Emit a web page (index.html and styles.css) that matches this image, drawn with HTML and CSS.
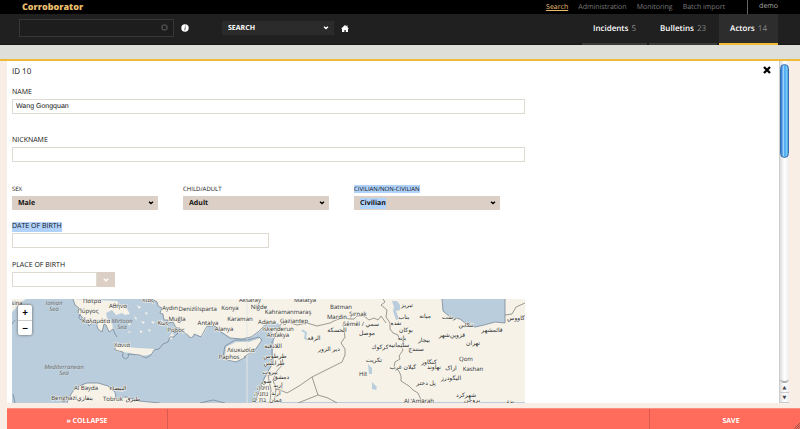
FILE: index.html
```html
<!DOCTYPE html>
<html lang="en">
<head>
<meta charset="utf-8">
<title>Corroborator</title>
<link rel="stylesheet" href="styles.css">
</head>
<body>
<div class="topbar">
  <a class="brand" href="#">Corroborator</a>
  <nav class="topnav">
    <a class="current" href="#">Search</a>
    <a href="#">Administration</a>
    <a href="#">Monitoring</a>
    <a href="#">Batch import</a>
  </nav>
  <a class="user" href="#">demo</a>
</div>
<header class="header">
  <div class="searchbox">
    <input type="text" aria-label="Search text">
    <button class="clear" type="button" aria-label="Clear">
      <svg width="7" height="7" viewBox="0 0 7 7"><circle cx="3.5" cy="3.5" r="3.3" fill="#484848"/><path d="M2.2 2.2l2.6 2.6M4.8 2.2L2.2 4.8" stroke="#111" stroke-width="1.2"/></svg>
    </button>
  </div>
  <button class="info" type="button" aria-label="Help">
    <svg width="8" height="8" viewBox="0 0 8 8"><circle cx="4" cy="4" r="3.7" fill="#fff"/><path d="M4.5 1.5v1M4.2 3.3L3.8 6.3" stroke="#555" stroke-width=".9"/></svg>
  </button>
  <select class="presets" aria-label="Saved searches"><option>SEARCH</option></select>
  <a class="home" href="#" aria-label="Home">
    <svg width="8" height="7" viewBox="0 0 8 7"><path d="M4 0L5.5 1.4V.6h1v1.7L8 3.8H7V7H4.8V5H3.4v2H1V3.8H0z" fill="#fff"/></svg>
  </a>
  <nav class="tabs">
    <a href="#">Incidents <span>5</span></a>
    <a href="#">Bulletins <span>23</span></a>
    <a class="active" href="#">Actors <span>14</span></a>
  </nav>
</header>
<div class="band"></div>
<main class="main">
  <section class="panel">
    <form class="form">
      <div class="record">ID 10</div>
      <div class="field name"><label for="name">NAME</label><input id="name" type="text" value="Wang Gongquan"></div>
      <div class="field nick"><label for="nick">NICKNAME</label><input id="nick" type="text"></div>
      <div class="triple">
        <div class="field"><label for="sex">SEX</label><select id="sex"><option>Male</option></select></div>
        <div class="field"><label for="age">CHILD/ADULT</label><select id="age"><option>Adult</option></select></div>
        <div class="field"><label for="civ"><span class="marked">CIVILIAN/NON-CIVILIAN</span></label><select id="civ" class="marked-select"><option>Civilian</option></select></div>
      </div>
      <div class="field half"><label for="dob"><span class="marked">DATE OF BIRTH</span></label><input id="dob" type="text"></div>
      <div class="field place"><label for="pob">PLACE OF BIRTH</label>
        <div class="combo"><input id="pob" type="text"><button type="button" aria-label="Show places"><svg width="6" height="4" viewBox="0 0 6 4"><path d="M.8.8L3 2.8 5.2.8" fill="none" stroke="#fff" stroke-width="1.4"/></svg></button></div>
      </div>
      <div class="map">
        <svg class="mapart" width="100%" height="104">
          <rect width="100%" height="104" class="sea"/>
          <g class="land">
            <path d="M0 0H14L8 4 3 10 0 13z"/>
            <path d="M61 0l2 6 4 3-2 4 6 6 4 3 2 5 4-4 3 1 2 6 4 3 2-8 2 1 3 7 4-3-1-7-5-4-1-5 6-3 4 5 6-2 3 2 5-1-3-5-6-3-4-5z"/>
            <path d="M140 0l5 3 1 4 4 2-2 5 3 1 1 6 4 0 0 3 5-1 3 6 4 0 4 5 7 5 4-4 7 3 6-11 8 0 6 6 9 6 12 1 9-2 7-5 6-6 7-4 4 5-5 7 3 5-1 13 1 10-6 10-5 10-5 14-2 6H900V0z"/>
            <path d="M103 47l6-1 5 2 12 1 17 1-3 5-10 2-12-3-15-2z"/>
            <path d="M213 58l1-10 10-5 13 0 11-4 1 4-8 10-10 7-9 3-8-2z"/>
            <path d="M55 104l4-9 5-7 11-4 11 0 10 3 7 6 1 6 11-1 12 4 21 2z"/>
            <path d="M157 38l3-4 2 2-3 5zM115 22l4 3-2 2zM122 17l3 2-1 2zM129 22l4 1-2 2zM136 30l3 1-2 2zM128 31l3 2-3 1zM125 6l4 2-2 2zM133 13l3 1-2 2zM139 22l4 1-2 2zM116 32l3 1-2 1z"/>
          </g>
          <g class="sea">
            <path d="M430 0l1 12 7 6 10 2 5 4 10 4 9-2 11-3 10 1V0z"/>
            <path d="M380 2l5 0 3 4 0 5-4 1 3 8-3 1-3-9 1-4zM356 65l4 4 0 6-3 0zM360 83l5 5-1 3-4-1zM260 27l6-3 3 4-5 3z"/>
          </g>
          <path d="M290 31l4 3-1 5 3 2" fill="none" stroke="#b8d0df" stroke-width="2"/>
          <path class="tile" d="M235 0v104"/>
          <g class="coast">
            <path d="M0 25l3-4M1 95l2 9M61 0l2 6 4 3-2 4 6 6 4 3 2 5 4-4 3 1 2 6 4 3 2-8 2 1 3 7 4-3 2 5 2 3"/>
            <path d="M69 15a3 3 0 1 0 4 3M103 47l0 4 8 2 0 2a3 3 0 1 0 5 0l12 1 6 3 5-3 3-5 5-1 4-5 5-2 2-5 4 0 4-4-5-1"/>
            <path d="M140 0l5 3 1 4 4 2-2 5 3 1 1 6 4 0 0 3 5-1 3 6 4 0 4 5 4 2a3 3 0 1 0 6-1l7 3 6-11 8 0 6 6 9 6 12 1 9-2 7-5 6-6 7-4"/>
            <path d="M211 58l2-11 10-6 13 0 11-3 3 3-7 10-11 7 2 0-10 5-9-2z"/>
            <path d="M55 104l4-9 5-7 11-4 11 0 10 3 7 6 1 6 11-1 12 4 21 2M188 104l13-3 12 3M263 38l-3 5 0 11 1 10-6 10-5 10-5 14-2 6"/>
            <path d="M430 0l1 12 7 6 10 2 5 4 10 4 9-2 11-3 10 1V0"/>
          </g>
          <g class="border">
            <path d="M263 38l3-9 4-5 3 2 3-3 9 3 10-2 10 3 13-3 6-3 7-2 7 1 4 0 3-3 7 0 5 4 5-2 4 2 3-4 5 7"/>
            <path d="M371 0l2 3-4 3 6 5-1 7 4 6 0 6 3 4 5 2 1 4 5 2-3 5 2 4-4 6 1 3-5 3-1 5 5 4 2 5 0 5 8 5 4 4 5 3 4 9"/>
            <path d="M331 25l2 13-4 6 4 6 0 6-3 7-30 15-13 9-12 7-7-3-5-1M300 78l6 18-20 8M306 96l10 3 9 5M270 57l1 8-7 8-3 8 3 9-1 8M256 76l3 15-1 13M493 16l7-1 4-7 9-4"/>
          </g>
          <g class="names" text-anchor="middle">
            <text x="5" y="6">sina</text><text x="80" y="4">Πάτρα</text><text x="76" y="14">Πύργος</text><text x="106" y="9">Αθήνα</text><text x="84" y="24">Καλαμάτα</text><text x="110" y="48">Χανιά</text><text x="136" y="3">Χίος</text>
            <text x="151" y="26">Κως</text><text x="164" y="33">Ρόδος</text><text x="158" y="11">Aydın</text><text x="176" y="12">Denizli</text><text x="195" y="12">Isparta</text><text x="165" y="22">Muğla</text><text x="196" y="26">Antalya</text><text x="212" y="32">Alanya</text><text x="218" y="11">Konya</text><text x="228" y="22">Karaman</text><text x="238" y="3">Aksaray</text><text x="247" y="10">Niğde</text><text x="293" y="3">Malatya</text><text x="276" y="15">Kahramanmaraş</text><text x="255" y="25">Adana</text><text x="282" y="24">Gaziantep</text><text x="266" y="32">İskenderun</text><text x="266" y="38">Antakya</text><text x="329" y="10">Batman</text><text x="325" y="20">Mardin</text><text x="346" y="17">Şırnak</text>
            <text x="229" y="53">Λευκωσία</text><text x="217" y="60">Paphos</text><text x="74" y="91">Al Bayda</text><text x="106" y="91">البيضاء</text><text x="52" y="101">Benghazi</text><text x="73" y="101">بنغازي</text><text x="101" y="102">Tobruk</text><text x="121" y="102">طبرق</text>
            <text x="349" y="27">Sêmêl / سمي</text><text x="325" y="33">الحسكة</text><text x="302" y="41">الرقة</text><text x="317" y="52">دير الزور</text><text x="261" y="49">اللاذقية</text><text x="263" y="59">طرطوس</text><text x="262" y="66">طرابلس</text><text x="258" y="75">بيروت</text><text x="269" y="80">دمشق</text><text x="254" y="84">صور</text><text x="266" y="88">إربد</text><text x="251" y="91">חיפה</text><text x="249" y="97">נתניה</text><text x="264" y="96">اربد</text><text x="247" y="103">בת ים</text><text x="264" y="103">عمان</text>
            <text x="395" y="8">تبريز</text><text x="392" y="20">بناب</text><text x="413" y="19">ميانه</text><text x="437" y="20">رشت</text><text x="384" y="26">نقده</text><text x="394" y="33">بوكان</text><text x="355" y="36">موصل</text><text x="454" y="28">تنكابن</text><text x="480" y="33">قائمشهر</text><text x="504" y="21">گاووس</text><text x="440" y="38">قزوين‌شهر</text><text x="390" y="41">بانه</text><text x="412" y="43">بيجار</text><text x="461" y="46">تهران</text><text x="387" y="48">سليمانيه</text><text x="368" y="50">كركوك</text><text x="404" y="52">سنندج</text><text x="362" y="63">تكريت</text><text x="391" y="70">گيلان غرب</text><text x="417" y="65">كنگاور</text><text x="422" y="70">نهاوند</text><text x="439" y="71">اراک</text><text x="454" y="62">Qom</text><text x="461" y="72">Kashan</text><text x="351" y="77">Hit</text><text x="439" y="81">اليگودرز</text><text x="414" y="86">پل دختر</text><text x="454" y="98">شهركرد</text><text x="460" y="103">بروجن</text><text x="498" y="104">يزد</text><text x="407" y="104">Al ‘Amārah</text>
          </g>
          <g class="seas" text-anchor="middle"><text x="42" y="6">Ionian</text><text x="42" y="12">Sea</text><text x="110" y="24">Mirtoon</text><text x="110" y="30">Sea</text><text x="52" y="70">Mediterranean</text><text x="52" y="76">Sea</text></g>
        </svg>
        <div class="zoom"><button type="button">+</button><button type="button">−</button></div>
      </div>
    </form>
    <button class="close" type="button" aria-label="Close"><svg width="8" height="8" viewBox="0 0 8 8"><path d="M1 1l6 6M7 1L1 7" stroke="#000" stroke-width="2.3"/></svg></button>
  </section>
  <div class="scroll">
    <div class="thumb"></div>
    <div class="track"></div>
    <div class="arrow">▲</div>
    <div class="arrow">▼</div>
  </div>
</main>
<footer class="actions">
  <button type="button">» COLLAPSE</button>
  <div></div>
  <button type="button">SAVE</button>
  <svg class="grip" width="6" height="6" viewBox="0 0 6 6"><path d="M0 6L6 0M2 6l4-4M4 6l2-2" stroke="#8c5048" stroke-width=".8"/></svg>
</footer>
</body>
</html>
```
FILE: styles.css
```css
* { box-sizing: border-box; }
body {
  margin: 0;
  height: 100vh;
  display: flex;
  flex-direction: column;
  overflow: hidden;
  background: #f9eee6;
  color: #111;
  font: 7px/10px "Open Sans", "Noto Sans", sans-serif;
  text-rendering: geometricPrecision;
}
a { color: inherit; text-decoration: none; }
button, input, select { font: inherit; color: inherit; margin: 0; padding: 0; border: 0; border-radius: 0; outline: 0; text-rendering: inherit; }
button { background: none; }
svg { display: block; }
select { appearance: none; }

.topbar { display: flex; height: 14px; flex: none; padding: 0 22px; align-items: center; background: #000; color: #7c7c7c; }
.brand { color: #eabe6c; font-size: 9px; font-weight: 800; }
.topnav { display: flex; gap: 10px; margin-left: auto; line-height: 12px; }
.topnav a { padding-top: 1px; }
.topnav .current { color: #eabe6c; text-decoration: underline; }
.user { margin-left: 22px; padding-left: 11px; border-left: 1px solid #666; line-height: 14px; color: #aaa; }

.header { display: flex; height: 31px; flex: none; padding: 0 22px 0 19px; align-items: center; background: #202020; border-bottom: 1px solid #181818; color: #fff; }
.searchbox { display: flex; width: 155px; height: 18px; margin-bottom: 3px; align-items: center; padding-right: 5px; border: 1px solid #373737; background: #1d1d1d; }
.searchbox input { flex: 1; min-width: 0; background: none; }
.info { margin: 0 33px 2px 7px; }
.presets { width: 112px; height: 14px; margin-bottom: 2px; padding: 1px 6px 0; font-weight: 700; background: #2b2b2b url("data:image/svg+xml,%3Csvg xmlns='http://www.w3.org/2000/svg' width='6' height='4'%3E%3Cpath d='M1 .8L3 2.6 5 .8' fill='none' stroke='white' stroke-width='1.4'/%3E%3C/svg%3E") no-repeat right 5px center; }
.home { margin: 0 0 2px 7px; }
.tabs { display: flex; gap: 2px; height: 31px; margin: 0 0 -1px auto; font-size: 8px; font-weight: 600; line-height: 29px; }
.tabs a { padding: 0 11px; border-bottom: 2px solid #3b3b3b; }
.tabs span { margin-left: 1px; color: #8b8b8b; font-weight: 400; }
.tabs .active { background: #2d2d2d; border-color: #f2bb33; }

.band { height: 16px; flex: none; background: #dfdfda; border-bottom: 2px solid #edbb38; }
.main { display: flex; flex: 1; min-height: 0; padding: 0 11px 0 7px; }
.panel { display: flex; flex: 1; min-width: 0; justify-content: space-between; align-items: flex-start; padding: 5px 8px 0 5px; background: #fff; overflow: hidden; }
.form { width: 68%; padding-right: 3px; }
.record { font-size: 8px; line-height: 11px; }
.field label { display: block; margin-bottom: 1px; line-height: 11px; }
.field input { display: block; width: 100%; height: 15px; padding: 0 3px; border: 1px solid #dfdad2; background: #fff; font-family: "Liberation Sans", sans-serif; }
.name { margin-top: 10px; }
.nick { margin-top: 21px; }
.triple { display: grid; grid-template-columns: repeat(3, 1fr); gap: 25px; margin-top: 22px; padding-right: 25px; font-size: 6px; }
.triple select { display: block; width: 100%; height: 14px; padding: 1px 6px 0; font-size: 7px; font-weight: 700; background: #dcd0c6 url("data:image/svg+xml,%3Csvg xmlns='http://www.w3.org/2000/svg' width='6' height='4'%3E%3Cpath d='M1 .8L3 2.6 5 .8' fill='none' stroke='black' stroke-width='1.3'/%3E%3C/svg%3E") no-repeat right 4px center; }
.marked { display: inline-block; background: #b0d2fb; line-height: 10px; }
.triple .marked { line-height: 8px; }
.triple .marked-select { background-image: url("data:image/svg+xml,%3Csvg xmlns='http://www.w3.org/2000/svg' width='6' height='4'%3E%3Cpath d='M1 .8L3 2.6 5 .8' fill='none' stroke='black' stroke-width='1.3'/%3E%3C/svg%3E"), linear-gradient(#b0d2fb, #b0d2fb); background-size: auto, 26px 11px; background-position: right 4px center, 6px center; }
.half { width: 50%; margin-top: 11px; }
.place { width: 20%; margin-top: 12px; }
.combo { display: flex; }
.combo input { flex: 1; min-width: 0; }
.combo button { display: grid; place-items: center; width: 18px; height: 15px; background: #dcd0c6; }

.map { position: relative; margin-top: 12px; overflow: hidden; }
.sea { fill: #bacddc; }
.land { fill: #f6f2e7; }
.coast { fill: none; stroke: #78899a; stroke-width: .8; stroke-linejoin: round; }
.border { fill: none; stroke: #85827a; stroke-width: .8; stroke-linejoin: round; }
.tile { stroke: #e4e6e5; }
.names, .seas { font-family: "Open Sans", "DejaVu Sans", sans-serif; font-size: 6px; fill: #2c2c2c; stroke: #f8f6ee; stroke-width: 1px; paint-order: stroke; }
.seas { font-style: italic; fill: #59636a; stroke: #cad6de; }
.zoom { position: absolute; left: 6px; top: 6px; width: 14px; border-radius: 2px; background: #fff; box-shadow: 0 0 3px #555; }
.zoom button { display: block; width: 100%; height: 15px; color: #000; font-size: 10px; font-weight: 700; line-height: 15px; }
.zoom button + button { border-top: 1px solid #ccc; }

.scroll { display: flex; width: 10px; flex-direction: column; padding-top: 3px; border-left: 1px solid #ccc; background: linear-gradient(90deg, #ddd, #fff 50%, #eee); }
.thumb { height: 94px; border: 1px solid #376fae; border-radius: 5px; background: linear-gradient(90deg, #2770d0, #9bd5fb 35%, #42a0ef 55%, #83d7ff 85%, #3f83b8); }
.track { flex: 1; border-bottom: 2px solid #aaa; border-radius: 0 0 5px 5px; }
.arrow { height: 10px; color: #444; font: 5px/10px "DejaVu Sans", sans-serif; text-align: center; border-bottom: 1px solid #ccc; }

.actions { position: relative; display: grid; grid-template-columns: 160px 1fr 150px; height: 21px; flex: none; margin: 5px 0 0 7px; background: #ff6c5b; border-top: 1px solid #ff9183; color: #fff; }
.actions button { padding-top: 5px; font-weight: 700; }
.actions div { border: solid #d95b4f; border-width: 0 1px; }
.actions button:last-of-type { padding-left: 12px; }
.grip { position: absolute; right: 0; bottom: 0; }
```
